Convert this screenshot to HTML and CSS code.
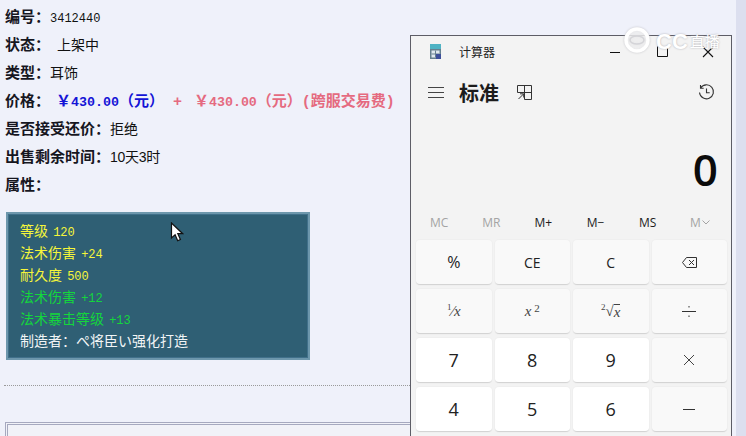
FILE: index.html
```html
<!DOCTYPE html>
<html lang="zh-CN">
<head>
<meta charset="utf-8">
<title>物品详情</title>
<link rel="stylesheet" href="styles.css">
</head>
<body>
<main class="page">
  <section class="details">
    <p class="row"><b class="label">编号：</b><span class="num">3412440</span></p>
    <p class="row"><b class="label">状态：</b><span class="status">上架中</span></p>
    <p class="row"><b class="label">类型：</b>耳饰</p>
    <p class="row"><b class="label">价格：</b><span class="price blue">￥<span class="d">430.00</span>（元）</span><span class="price red plus">+</span><span class="price red">￥<span class="d">430.00</span>（元）(跨服交易费)</span></p>
    <p class="row"><b class="label">是否接受还价：</b>拒绝</p>
    <p class="row"><b class="label">出售剩余时间：</b><span class="time">10天3时</span></p>
    <p class="row"><b class="label">属性：</b></p>
  </section>
  <section class="tip">
    <p class="yellow">等级 <span class="n">120</span></p>
    <p class="yellow">法术伤害 <span class="n">+24</span></p>
    <p class="yellow">耐久度 <span class="n">500</span></p>
    <p class="green">法术伤害 <span class="n">+12</span></p>
    <p class="green">法术暴击等级 <span class="n">+13</span></p>
    <p class="white">制造者：ぺ将臣い强化打造</p>
  </section>
  <hr class="dots">
  <div class="box"></div>
</main>

<svg class="cursor" width="14" height="20" viewBox="0 0 14 20"><path d="M1.500 1v15l3.600-3.300 2.600 6 2.700-1.200-2.600-5.800h4.900z" fill="#fff" stroke="#111" stroke-width="1.200"/></svg>

<aside class="calc">
  <header class="titlebar">
    <svg class="appicon" width="11" height="15" viewBox="0 0 11 15"><rect width="11" height="15" fill="#66808f"/><rect width="11" height="5" fill="#4fb3c4"/><rect x="1.500" y="6.500" width="8" height="7" fill="#dfe8ee"/><path d="M5.500 6.500v7M1.500 10h8" stroke="#66808f"/><rect x="6" y="10" width="5" height="5" fill="#3d4f9a"/></svg>
    <span class="apptitle">计算器</span>
    <div class="winbtns">
      <svg width="46" height="20" viewBox="0 0 46 20"><path d="M17 11.500h10" stroke="#111"/></svg>
      <svg width="46" height="20" viewBox="0 0 46 20"><path d="M18.500 5.500v10h10v-10" fill="none" stroke="#111"/></svg>
      <svg width="46" height="20" viewBox="0 0 46 20"><path d="M18 6l10 10M28 6l-10 10" stroke="#111" stroke-width="1.100"/></svg>
    </div>
  </header>
  <div class="modebar">
    <svg class="menu" width="16" height="12" viewBox="0 0 16 12"><path d="M0 1.500h16M0 6.500h16M0 11.500h16" stroke="#444"/></svg>
    <strong class="mode">标准</strong>
    <svg class="keep" width="15" height="15" viewBox="0 0 15 15"><path d="M.5 7.500V.5h14v14h-7V.5M.5 7.500h14M1.500 14l5-5M3 8.800h3.700v3.700" fill="none" stroke="#333"/></svg>
    <svg class="history" width="17" height="17" viewBox="0 0 17 17"><path d="M2.600 4A7 7 0 1 1 1.500 8.500M2.500 1v3.200h3.200M8.500 4.500v4.300h3.200" fill="none" stroke="#333" stroke-width="1.100"/></svg>
  </div>
  <div class="display">0</div>
  <div class="memory">
    <span class="off">MC</span><span class="off">MR</span><span>M+</span><span>M−</span><span>MS</span><span class="off">M<svg class="chev" width="8" height="5" viewBox="0 0 8 5"><path d="M.5.500L4 4 7.500.5" fill="none" stroke="#a4a4a4"/></svg></span>
  </div>
  <div class="keys">
    <button class="key">%</button>
    <button class="key small">CE</button>
    <button class="key small">C</button>
    <button class="key"><svg width="15" height="11" viewBox="0 0 15 11"><path d="M4.500.5h10v10h-10L.5 5.500zM7 3l5 5M12 3l-5 5" fill="none" stroke="#333"/></svg></button>
    <button class="key math"><sup>1</sup>⁄<i>x</i></button>
    <button class="key math"><i>x</i><sup class="sq">2</sup></button>
    <button class="key math"><sup>2</sup>√<i class="over">x</i></button>
    <button class="key"><svg width="14" height="13" viewBox="0 0 14 13"><path d="M0 6.500h14M7 1v1.500M7 10.500V12" stroke="#333"/></svg></button>
    <button class="key num-key">7</button>
    <button class="key num-key">8</button>
    <button class="key num-key">9</button>
    <button class="key"><svg width="12" height="12" viewBox="0 0 12 12"><path d="M1 1l10 10M11 1L1 11" stroke="#444"/></svg></button>
    <button class="key num-key">4</button>
    <button class="key num-key">5</button>
    <button class="key num-key">6</button>
    <button class="key"><svg width="12" height="3" viewBox="0 0 12 3"><path d="M0 1.500h12" stroke="#333"/></svg></button>
  </div>
</aside>

<div class="watermark">
  <svg class="wm-logo" width="28" height="26" viewBox="0 0 28 26"><circle cx="14" cy="13" r="11" fill="#fff" fill-opacity=".55" stroke="#fff" stroke-width="3.500"/><ellipse cx="14" cy="13" rx="7" ry="4" fill="none" stroke="#d4d4d8" stroke-width="1.500"/></svg>
  <span class="wm-cc">CC</span><span class="wm-cn">直播</span>
</div>
</body>
</html>
```
FILE: styles.css
```css
* { box-sizing: border-box; }
html, body {
  margin: 0;
  height: 100%;
  overflow: hidden;
}
body {
  background: #eff1fa;
  font-family: "Noto Sans CJK SC", sans-serif;
  font-size: 14px;
  color: #111;
}
p { margin: 0; }

.page {
  height: 436px;
  padding: 2px 0 0 5px;
  border-right: 10px solid #dcdfef;
  width: 746px;
  overflow: hidden;
}
.row {
  height: 28px;
  line-height: 28px;
  white-space: nowrap;
}
.label { font-weight: 700; font-size: 15px; color: #16161f; }
.num { font-family: "Liberation Mono", monospace; font-size: 12px; }
.time { font-family: "Liberation Sans", "Noto Sans CJK SC", sans-serif; font-size: 14px; letter-spacing: -.3px; }
.status { margin-left: 7px; }
.price {
  font-family: "Liberation Mono", "Noto Sans CJK SC", monospace;
  font-weight: 700;
  font-size: 15px;
}
.d { font-size: 13.300px; }
.blue { color: #1414d6; margin-left: 6px; }
.red { color: #e56a80; }
.plus { margin: 0 12px 0 9px; }

.tip {
  width: 304px;
  height: 148px;
  margin: 14px 0 0 1px;
  padding: 5px 0 0 12px;
  background: #2f5f74;
  border: 2px solid #6d97ac;
  box-shadow: inset 0 0 0 1px #40708a;
}
.tip p { height: 22px; line-height: 22px; white-space: nowrap; }
.n { font-family: "Liberation Mono", monospace; font-size: 12px; margin-left: 2px; }
.yellow { color: #f6f63a; }
.green { color: #14d63c; }
.white { color: #f2f5f6; }

.dots {
  width: 406px;
  margin: 25px 0 0 -1px;
  border: 0;
  border-top: 1px dotted #9a9a9a;
}
.box {
  width: 720px;
  height: 40px;
  margin-top: 36px;
  border: 3px double #a6a9bf;
  background: #f1f2f8;
}

.cursor { position: absolute; left: 170px; top: 222px; }

.calc {
  position: absolute;
  left: 410px;
  top: 35px;
  width: 322px;
  height: 401px;
  overflow: hidden;
  background: #f3f3f3;
  border: 1px solid #5d5d66;
  border-bottom: 0;
  display: flex;
  flex-direction: column;
  font-family: "Open Sans", "Noto Sans CJK SC", sans-serif;
}
.titlebar {
  height: 32px;
  flex: none;
  display: flex;
  align-items: center;
  padding: 0 0 2px 19px;
}
.appicon { margin-right: 18px; }
.apptitle { font-size: 12px; color: #222; font-family: "Noto Sans CJK SC", sans-serif; }
.winbtns { margin-left: auto; display: flex; }
.modebar {
  height: 46px;
  margin-top: 1px;
  flex: none;
  display: flex;
  align-items: center;
  padding: 0 17px;
}
.menu { flex: none; }
.mode {
  margin-left: 15px;
  font-size: 20px;
  font-family: "Noto Sans CJK SC", sans-serif;
  font-weight: 700;
  color: #1c1c1c;
}
.keep { margin-left: 18px; }
.history { margin-left: auto; margin-right: -1px; }
.display {
  height: 89px;
  flex: none;
  text-align: right;
  padding: 19px 13px 0 0;
  font-size: 44px;
  line-height: 70px;
  font-weight: 600;
  color: #0b0b0b;
}
.memory {
  height: 36px;
  flex: none;
  display: grid;
  grid-template-columns: repeat(6, 1fr);
  align-items: center;
  padding: 0 5px 0 2px;
  text-align: center;
  font-size: 12px;
  color: #1c1c1c;
}
.off { color: #a4a4a4; }
.chev { margin-left: 1px; vertical-align: 2px; }
.keys {
  display: grid;
  grid-template-columns: repeat(4, 75.500px);
  grid-auto-rows: 45px;
  gap: 4px 3px;
  padding: 0 0 0 5px;
}
.key {
  border: 0;
  border-bottom: 1px solid #d4d4d4;
  border-radius: 4px;
  background: #f9f9f9;
  box-shadow: 0 0 0 1px #efefef;
  padding: 0;
  font-family: "Open Sans", sans-serif;
  font-size: 16px;
  color: #222;
  display: flex;
  align-items: center;
  justify-content: center;
}
.small { font-size: 14px; }
.num-key { background: #fff; font-size: 18px; }
.math { font-family: "Liberation Serif", serif; font-size: 15px; color: #444; }
.math sup { font-size: 9px; line-height: 1; align-self: flex-start; margin-top: 14px; }
.math .sq { font-size: 11px; margin-left: 3px; }
.over { border-top: 1px solid #444; line-height: 14px; }

.watermark {
  position: absolute;
  left: 623px;
  top: 25px;
  display: flex;
  align-items: center;
  color: #fff;
  font-family: "Liberation Sans", "Noto Sans CJK SC", sans-serif;
  line-height: 26px;
  white-space: nowrap;
  text-shadow: 0 0 2px #a8a8ae;
}
.wm-logo { margin-right: 5px; filter: drop-shadow(0 0 1px #c4c4c8); }
.wm-cc { font-size: 22px; font-weight: 700; margin-top: 4px; }
.wm-cn { font-size: 15px; margin: 4px 0 0 2px; }
```
